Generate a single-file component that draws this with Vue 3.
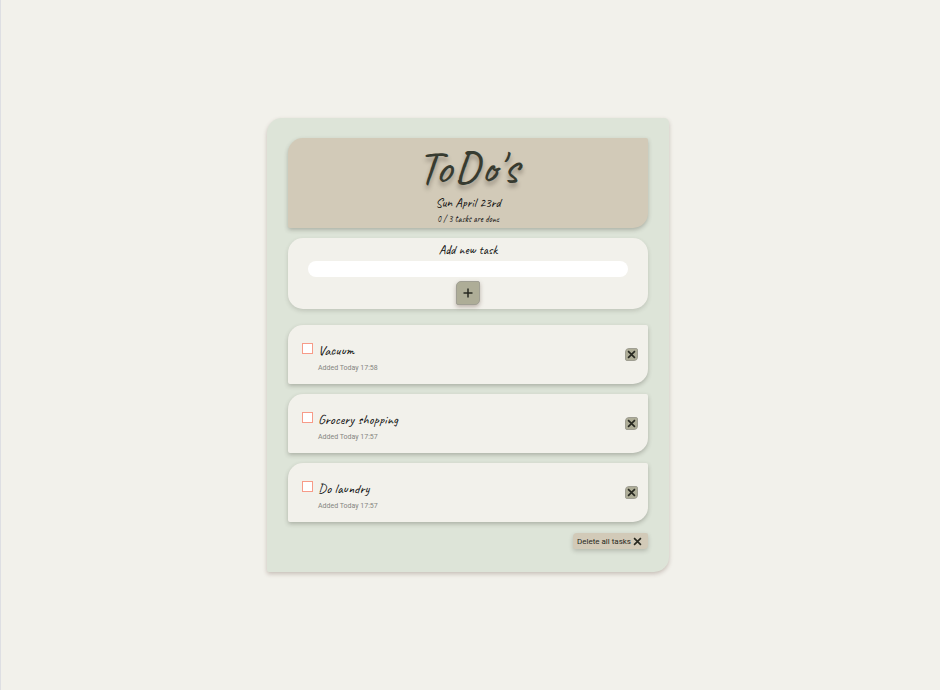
<template>
  <div class="page">
    <main class="app">
      <header class="header">
        <h1>ToDo's</h1>
        <p class="date">Sun April 23rd</p>
        <p class="counter">{{ doneCount }} / {{ tasks.length }} tasks are done</p>
      </header>

      <form class="add-task" @submit.prevent="addTask">
        <label for="new-task">Add new task</label>
        <input id="new-task" v-model="newTask" type="text" />
        <button type="submit" class="add-btn" aria-label="Add task">
          <svg viewBox="0 0 10 10" width="10" height="10">
            <path d="M5 .5v9M.5 5h9" />
          </svg>
        </button>
      </form>

      <ul class="tasks">
        <li v-for="task in tasks" :key="task.id" class="task">
          <input :id="'task-' + task.id" v-model="task.done" type="checkbox" />
          <div class="task-text">
            <label :for="'task-' + task.id">{{ task.text }}</label>
            <p class="added">Added {{ task.added }}</p>
          </div>
          <button type="button" class="remove-btn" aria-label="Delete task" @click="removeTask(task.id)">
            <svg viewBox="0 0 10 10" width="9" height="9">
              <path d="M1.2 1.2l7.6 7.6M8.8 1.2L1.2 8.8" />
            </svg>
          </button>
        </li>
      </ul>

      <button type="button" class="delete-all" @click="tasks = []">
        Delete all tasks
        <svg viewBox="0 0 10 10" width="9" height="9">
          <path d="M1.2 1.2l7.6 7.6M8.8 1.2L1.2 8.8" />
        </svg>
      </button>
    </main>
  </div>
</template>

<script setup>
import { ref, computed } from 'vue';

const newTask = ref('');

const tasks = ref([
  { id: 3, text: 'Vacuum', added: 'Today 17:58', done: false },
  { id: 2, text: 'Grocery shopping', added: 'Today 17:57', done: false },
  { id: 1, text: 'Do laundry', added: 'Today 17:57', done: false }
]);

const doneCount = computed(() => tasks.value.filter(t => t.done).length);

function addTask() {
  const text = newTask.value.trim();
  if (!text) return;
  const time = new Date().toTimeString().slice(0, 5);
  tasks.value.unshift({ id: Date.now(), text, added: 'Today ' + time, done: false });
  newTask.value = '';
}

function removeTask(id) {
  tasks.value = tasks.value.filter(t => t.id !== id);
}
</script>

<style>
body {
  background: #f2f1eb;
}
</style>

<style scoped>
* {
  box-sizing: border-box;
}

.page {
  min-height: 100vh;
  padding: 20px 5px 20px 0;
  border-left: 1px solid #dedfe3;
  display: flex;
  align-items: center;
  justify-content: center;
  background: #f2f1eb;
  color: #111;
  font-family: Roboto, sans-serif;
}

h1,
p,
ul {
  margin: 0;
  padding: 0;
}

h1,
.date,
.counter,
label {
  font-family: Caveat, Lato, sans-serif;
}

.app {
  width: 100%;
  max-width: 402px;
  padding: 20px 21px 23px;
  display: flex;
  flex-direction: column;
  background: #dde4d8;
  border-radius: 15px 5px 15px 2px;
  box-shadow: 0 2px 4px rgba(90, 60, 50, 0.28);
}

.header {
  padding: 5px 0 1px;
  text-align: center;
  background: #d2cab8;
  border-radius: 15px 2px 15px 2px;
  box-shadow: 0 2px 4px rgba(60, 60, 50, 0.3);
}

h1 {
  margin-bottom: 2px;
  font-size: 48px;
  line-height: 49px;
  font-weight: 500;
  color: #373b30;
  text-shadow: 0 4px 4px rgba(60, 50, 40, 0.4);
}

.date {
  font-size: 13px;
  line-height: 18px;
}

.counter {
  font-size: 9px;
  line-height: 15px;
}

.add-task {
  margin-top: 10px;
  padding: 5px 20px 4px;
  display: flex;
  flex-direction: column;
  align-items: center;
  background: #f2f1eb;
  border-radius: 15px;
  box-shadow: 0 2px 4px rgba(60, 60, 50, 0.18);
}

.add-task label {
  font-size: 13px;
  line-height: 14px;
}

.add-task input {
  width: 100%;
  height: 16px;
  margin: 4px 0;
  padding: 0 8px;
  border: none;
  border-radius: 8px;
  background: #fff;
  font-size: 11px;
}

button {
  padding: 0;
  border: 1px solid #a09f93;
  background: #aead97;
  display: flex;
  align-items: center;
  justify-content: center;
  cursor: pointer;
}

svg {
  fill: none;
  stroke: #272820;
  stroke-width: 1.5;
}

.add-btn {
  width: 24px;
  height: 24px;
  border-radius: 5px 2px 5px 2px;
  box-shadow: 0 2px 4px rgba(90, 60, 50, 0.35);
}

.tasks {
  margin-top: 16px;
  display: flex;
  flex-direction: column;
  gap: 10px;
  list-style: none;
}

.task {
  padding: 18px 10px 7px 14px;
  display: flex;
  align-items: flex-start;
  background: #f2f1eb;
  border-radius: 15px 2px 15px 2px;
  box-shadow: 0 2px 4px rgba(60, 60, 50, 0.3);
}

.task input {
  appearance: none;
  width: 11px;
  height: 11px;
  margin: 0;
  border: 1px solid #f79b88;
  background: #fff;
}

.task input:checked {
  background: #f79b88;
}

.task-text {
  flex: 1;
  padding-left: 5px;
}

.task label {
  display: block;
  font-size: 14px;
  line-height: 16px;
}

.added {
  font-size: 7px;
  line-height: 18px;
  color: #85857f;
}

.remove-btn {
  width: 13px;
  height: 13px;
  margin-top: 5px;
  border-radius: 4px 2px 4px 2px;
}

.remove-btn svg,
.delete-all svg {
  stroke-width: 1.8;
}

.delete-all {
  align-self: flex-end;
  height: 16px;
  margin-top: 11px;
  padding: 0 6px 0 4px;
  gap: 2px;
  border: none;
  border-radius: 4px 2px 4px 2px;
  background: #d2cab8;
  color: #272820;
  font-family: Roboto, sans-serif;
  font-size: 8px;
  box-shadow: 0 2px 4px rgba(60, 60, 50, 0.25);
}
</style>
